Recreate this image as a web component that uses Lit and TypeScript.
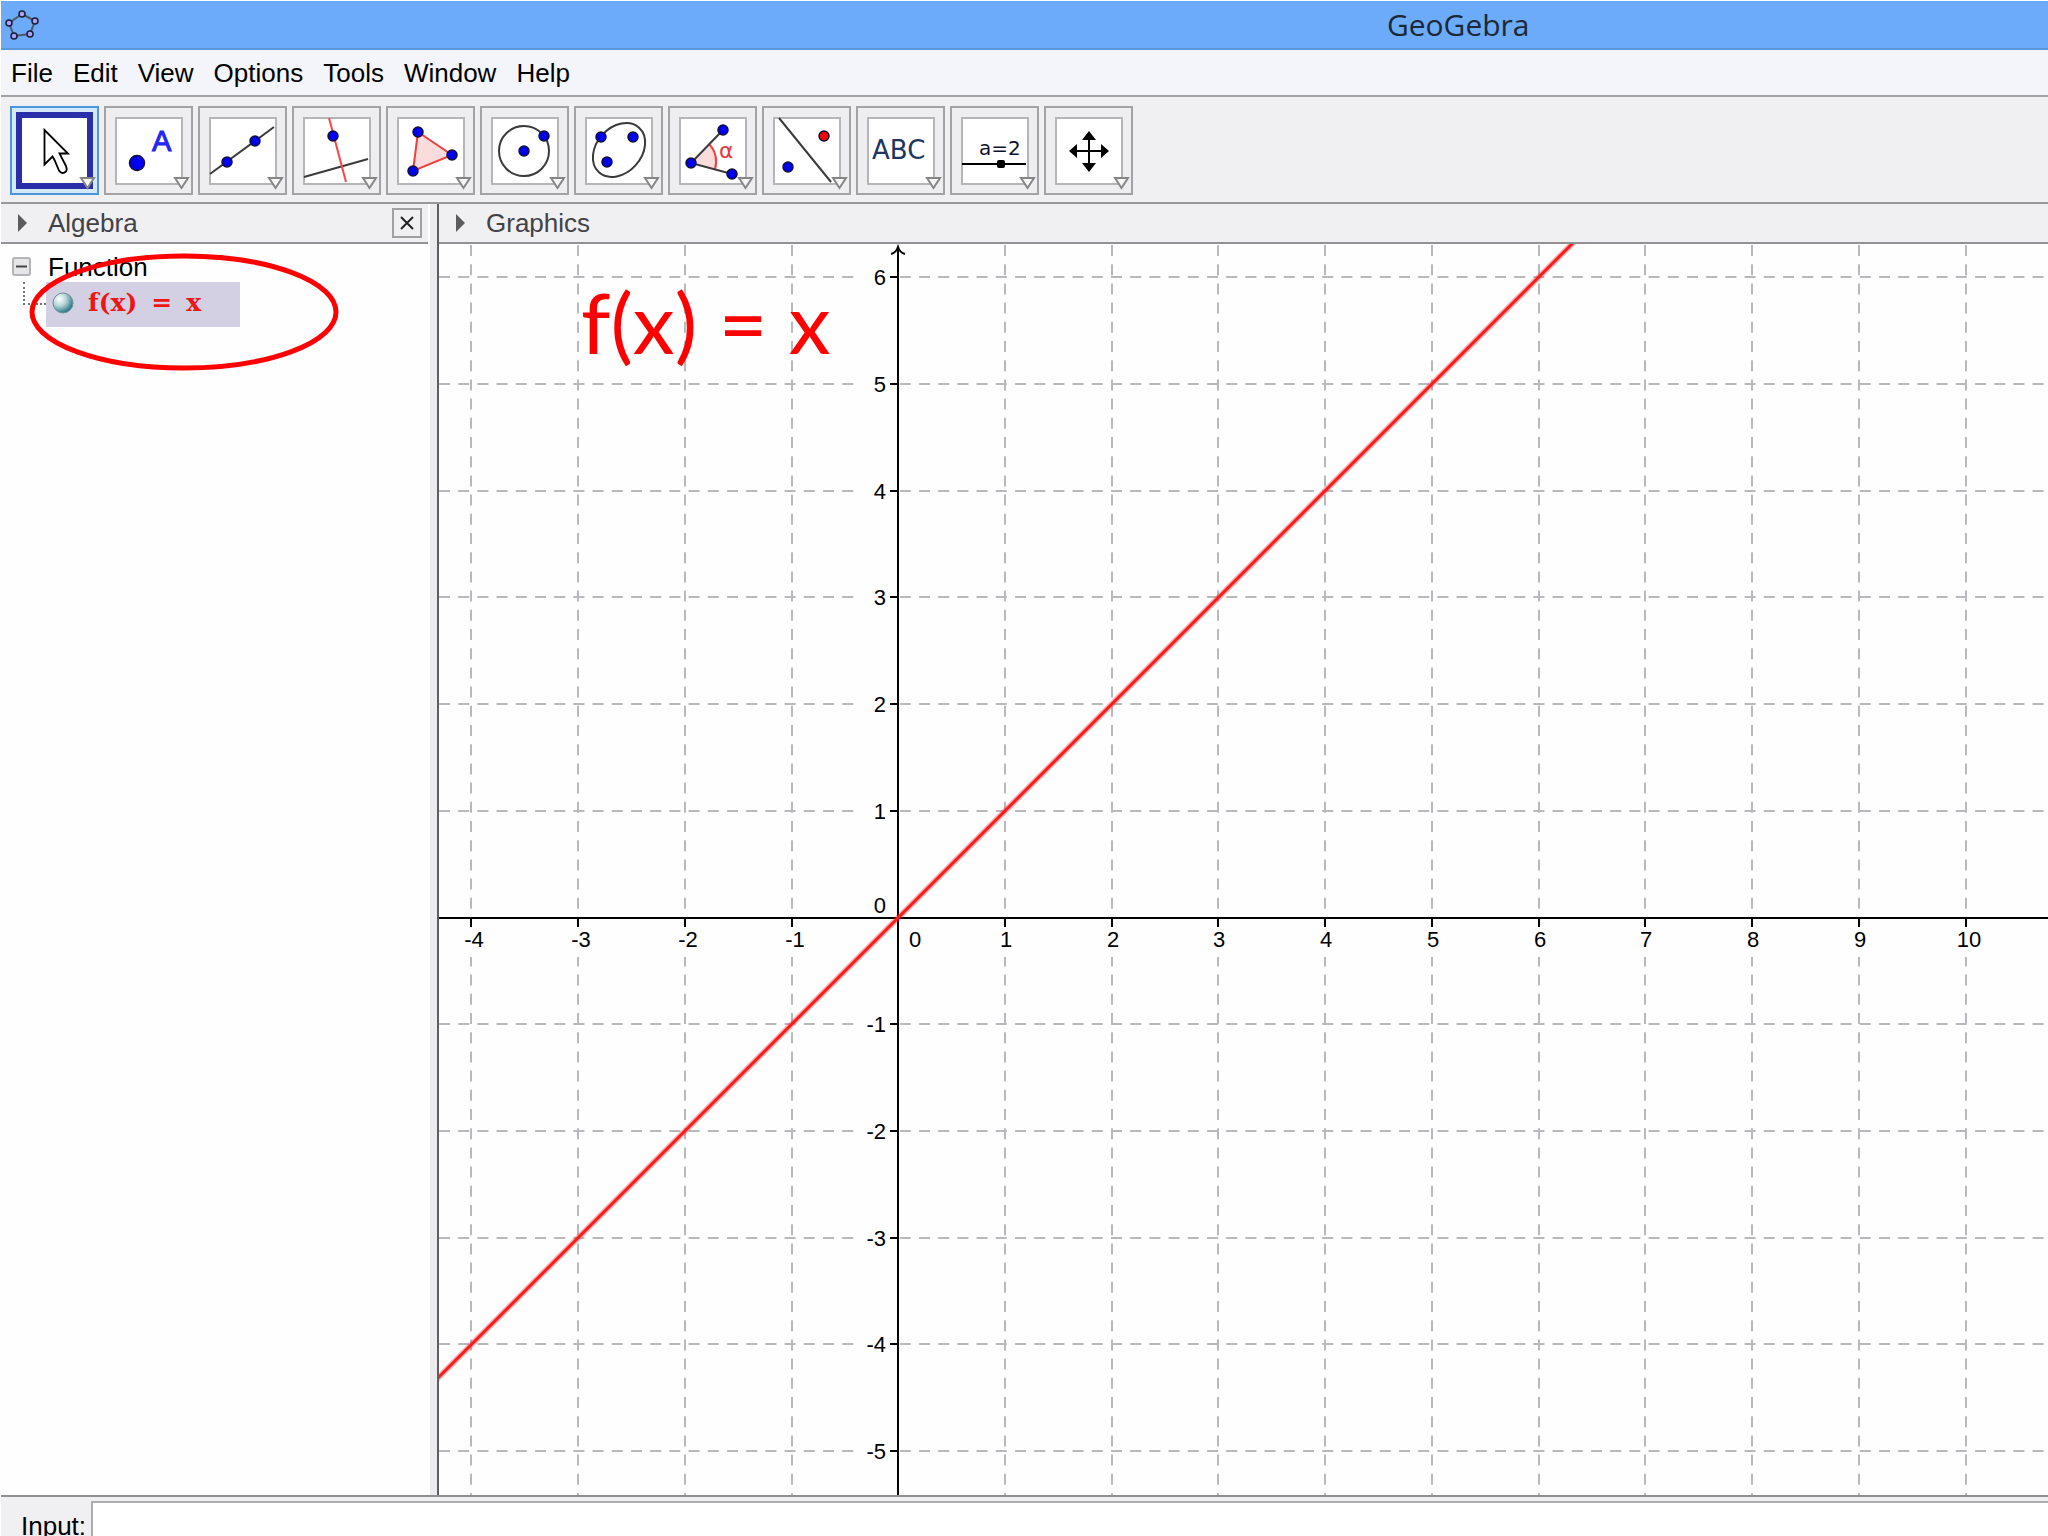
import { LitElement, html, svg, css, type TemplateResult } from "lit";
import { customElement, state } from "lit/decorators.js";

const point = (x: number, y: number, r = 5, fill = "#0000f0") =>
  svg`<circle cx=${x} cy=${y} r=${r} fill=${fill} stroke="#10103a" stroke-width="1.5"></circle>`;

interface Tool {
  name: string;
  icon: TemplateResult;
}

const tools: Tool[] = [
  {
    name: "Move",
    icon: svg`<path d="M34.5 24V58.5L42.5 50.5L44.5 54L49 64.5Q52 69 56 65.5Q57.5 63 56 60L49.5 47.5H58Z" fill="#fff" stroke="#000" stroke-width="1.8"></path>`,
  },
  {
    name: "New Point",
    icon: svg`${point(33, 57, 7.5)}<text x="48" y="45" class="letter">A</text>`,
  },
  {
    name: "Line through Two Points",
    icon: svg`<path d="M12 68L76 21" class="ink"></path>${point(29, 56)}${point(57, 35)}`,
  },
  {
    name: "Perpendicular Line",
    icon: svg`<path d="M12 71L76 53" class="ink"></path><path d="M37 12L54 76" stroke="#f44" stroke-width="2"></path>${point(41, 30)}`,
  },
  {
    name: "Polygon",
    icon: svg`<path d="M32 26L66 49L27 65Z" fill="#fbdcdc" stroke="#ee4040" stroke-width="2"></path>${point(32, 26)}${point(66, 49)}${point(27, 65)}`,
  },
  {
    name: "Circle with Center through Point",
    icon: svg`<circle cx="44" cy="45" r="25" class="ink"></circle>${point(44, 45)}${point(64, 30)}`,
  },
  {
    name: "Ellipse",
    icon: svg`<ellipse cx="45" cy="44" rx="30" ry="22.5" transform="rotate(-48 45 44)" class="ink"></ellipse>${point(27, 31)}${point(59, 31)}${point(33, 56)}`,
  },
  {
    name: "Angle",
    icon: svg`<path d="M23 57L41 38A25 25 0 0 1 47 63Z" fill="#fbdcdc"></path>
      <path d="M41 38A25 25 0 0 1 47 63" fill="none" stroke="#ee4040" stroke-width="2"></path>
      <path d="M55 24L23 57L64 68" class="ink"></path><text x="51" y="52" class="alpha">α</text>
      ${point(23, 57)}${point(55, 24)}${point(64, 68)}`,
  },
  {
    name: "Reflect Object about Line",
    icon: svg`<path d="M17 12L69 76" class="ink"></path>${point(62, 30, 5, "#ee0000")}${point(26, 61)}`,
  },
  {
    name: "Insert Text",
    icon: svg`<text x="16" y="53" class="abc">ABC</text>`,
  },
  {
    name: "Slider",
    icon: svg`<text x="29" y="49" class="slider">a=2</text><path d="M12 58H76" stroke="#000" stroke-width="2"></path><rect x="47" y="54" width="8" height="8" rx="2"></rect>`,
  },
  {
    name: "Move Graphics View",
    icon: svg`<path d="M45 27V64M27 45H63" stroke="#000" stroke-width="2"></path>
      <path d="M45 25L52 34H38ZM45 66L52 57H38ZM25 45L33 38V52ZM65 45L57 38V52Z"></path>`,
  },
];

@customElement("tool-button")
class ToolButton extends LitElement {
  static properties = { tool: { attribute: false }, active: { type: Boolean } };
  declare tool: Tool;
  declare active: boolean;

  static styles = css`
    :host {
      display: block;
    }
    button {
      display: block;
      width: 89px;
      height: 89px;
      padding: 0;
      border: 0;
      background: none;
    }
    svg {
      display: block;
    }
    .frame {
      fill: #eeedef;
      stroke: #a3a3a5;
      stroke-width: 2;
    }
    .well {
      fill: #fff;
      stroke: #b6b6b8;
      stroke-width: 2;
    }
    .active .frame {
      fill: #d3e9fb;
      stroke: #4a97de;
    }
    .active .well {
      stroke: #2a2ea8;
      stroke-width: 6;
    }
    .ink {
      fill: none;
      stroke: #3a3a3a;
      stroke-width: 2;
    }
    .letter {
      font: 29px "Liberation Sans", sans-serif;
      fill: #2424f4;
      stroke: #2424f4;
    }
    .alpha {
      font: 22px "DejaVu Sans", sans-serif;
      fill: #e8383c;
    }
    .abc {
      font: 26px "DejaVu Sans", sans-serif;
      fill: #1d3560;
    }
    .slider {
      font: 20px "DejaVu Sans", sans-serif;
      fill: #101030;
    }
    .more {
      fill: #f6f6f6;
      stroke: #858585;
      stroke-width: 2;
    }
  `;

  render() {
    const well = this.active ? [9, 71] : [12, 66];
    return html`<button
      type="button"
      class=${this.active ? "active" : ""}
      aria-label=${this.tool.name}
      aria-pressed=${this.active ? "true" : "false"}
    >
      <svg width="89" height="89" viewBox="0 0 89 89" aria-hidden="true">
        <rect class="frame" x="1" y="1" width="87" height="87"></rect>
        <rect class="well" x=${well[0]} y=${well[0]} width=${well[1]} height=${well[1]}></rect>
        ${this.tool.icon}
        <path class="more" d="M71 72H84L77.5 82Z"></path>
      </svg>
    </button>`;
  }
}

const UNIT = 106.72;
const ORIGIN = { x: 459.3, y: 673.6 };
const xs = Array.from({ length: 15 }, (_, i) => i - 4);
const ys = Array.from({ length: 12 }, (_, i) => 6 - i);
const toX = (v: number) => ORIGIN.x + v * UNIT;
const toY = (v: number) => ORIGIN.y - v * UNIT;

@customElement("graph-view")
class GraphView extends LitElement {
  static styles = css`
    :host {
      display: block;
      flex: 1;
      min-height: 0;
      position: relative;
      overflow: hidden;
      background: #fefefe;
    }
    .plot {
      display: block;
      width: 100%;
      height: 100%;
    }
    .grid {
      stroke: #b9b9bd;
      stroke-width: 2;
      stroke-dasharray: 11 8.2;
    }
    .blank {
      fill: #fefefe;
    }
    .axis {
      fill: none;
      stroke: #000;
      stroke-width: 2;
    }
    .label {
      font: 22px "Liberation Sans", Arial, sans-serif;
      fill: #000;
    }
    .mid {
      text-anchor: middle;
    }
    .end {
      text-anchor: end;
    }
    .halo {
      stroke: #ff2a2a;
      stroke-opacity: 0.35;
      stroke-width: 6;
    }
    .line {
      stroke: #f81c1c;
      stroke-width: 3;
    }
    .formula {
      position: absolute;
      left: 142px;
      top: 28px;
      font: 84px/100px Lato, Calibri, sans-serif;
      color: #f00;
      white-space: pre;
    }
  `;

  render() {
    return html`<svg class="plot" role="img" aria-label="f(x) = x">
        ${xs.map((v) => svg`<line class="grid" x1=${Math.round(toX(v))} x2=${Math.round(toX(v))} y1="1" y2="100%"></line>`)}
        ${ys.map((v) => svg`<line class="grid" x1="0" x2="100%" y1=${Math.round(toY(v))} y2=${Math.round(toY(v))}></line>`)}
        <rect class="blank" x="416" y="0" width="43" height="100%"></rect>
        <rect class="blank" x="0" y="668" width="100%" height="45"></rect>
        <line class="axis" x1="0" x2="100%" y1="674" y2="674"></line>
        <line class="axis" x1="459" x2="459" y1="4" y2="100%"></line>
        <path class="axis" d="M452 10Q457 9 459 3Q461 9 466 10"></path>
        ${xs.map((v) => {
          const x = Math.round(toX(v));
          const shift = v === 0 ? 17 : v < 0 || v > 9 ? 3 : 1;
          return svg`${v === 0 ? "" : svg`<path class="axis" d="M${x} 674V683"></path>`}
            <text class="label mid" x=${x + shift} y="703">${v}</text>`;
        })}
        ${ys.map((v) => {
          const y = Math.round(toY(v));
          return svg`${v === 0 ? "" : svg`<path class="axis" d="M451 ${y}H459"></path>`}
            <text class="label end" x="447" y=${v === 0 ? y - 5 : y + 8}>${v}</text>`;
        })}
        <line class="halo" x1=${toX(-5)} y1=${toY(-5)} x2=${toX(8)} y2=${toY(8)}></line>
        <line class="line" x1=${toX(-5)} y1=${toY(-5)} x2=${toX(8)} y2=${toY(8)}></line>
      </svg>
      <span class="formula">f(x) = x</span>`;
  }
}

@customElement("app-root")
class AppRoot extends LitElement {
  @state() private activeTool = 0;

  static styles = css`
    :host {
      display: block;
      font: 26px/30px "Liberation Sans", Arial, sans-serif;
      color: #000;
    }
    * {
      box-sizing: border-box;
    }
    .window {
      display: flex;
      flex-direction: column;
      height: 100vh;
      overflow: hidden;
      padding: 1px 0 0 1px;
      background: #fefefe;
    }
    .title-bar {
      display: flex;
      align-items: center;
      height: 49px;
      padding-left: 4px;
      background: #6cabf9;
      border-bottom: 2px solid #5c97dc;
    }
    .title {
      flex: 1;
      margin: 0;
      padding-left: 40.5%;
      text-align: center;
      font: 30px/40px "Open Sans", "Noto Sans", sans-serif;
      color: #1c2838;
    }
    .menu {
      display: flex;
      align-items: center;
      gap: 20px;
      height: 47px;
      padding-left: 10px;
      background: #f4f5fa;
      border-bottom: 2px solid #a2a2a5;
    }
    .menu button {
      padding: 0;
      border: 0;
      background: none;
      font: inherit;
      color: inherit;
    }
    .tools {
      display: flex;
      gap: 5px;
      padding: 9px 9px 7px;
      background: #f0eff1;
      border-bottom: 2px solid #98989a;
    }
    .panels {
      display: flex;
      flex: 1;
      min-height: 0;
    }
    .algebra {
      position: relative;
      flex: none;
      width: 429px;
    }
    .splitter {
      flex: none;
      width: 9px;
      background: #ecebee;
      border-right: 2px solid #5e5e60;
    }
    .graphics {
      display: flex;
      flex-direction: column;
      flex: 1;
      min-width: 0;
    }
    .panel-head {
      display: flex;
      align-items: center;
      flex: none;
      gap: 21px;
      height: 40px;
      padding-left: 17px;
      background: #f0eff1;
      border-bottom: 2px solid #929294;
      color: #424246;
    }
    .panel-head h2 {
      flex: 1;
      margin: 0;
      font: inherit;
    }
    .algebra .panel-head {
      margin-right: 2px;
      padding-right: 6px;
    }
    .close {
      width: 30px;
      height: 30px;
      padding: 0;
      border: 2px solid #a0a0a2;
      background: #f0eff1;
    }
    .close svg,
    .arrow {
      display: block;
    }
    .tree {
      padding: 7px 0 0 11px;
    }
    .branch {
      display: flex;
      align-items: center;
      gap: 17px;
      height: 31px;
    }
    .leaf {
      display: flex;
      height: 45px;
    }
    .twig {
      width: 23px;
      height: 23px;
      margin-left: 11px;
      border-left: 2px dotted #777;
      border-bottom: 2px dotted #777;
    }
    .object {
      display: flex;
      align-items: center;
      gap: 14px;
      width: 194px;
      padding: 0 0 4px 6px;
      background: #d3d0e4;
      font: bold 25px/36px "DejaVu Serif", serif;
      color: #f01414;
    }
    .mark {
      position: absolute;
      left: 27px;
      top: 48px;
      pointer-events: none;
    }
    .input-bar {
      display: flex;
      align-items: flex-start;
      gap: 5px;
      height: 41px;
      flex: none;
      padding: 4px 0 0 20px;
      background: #f0eff2;
      border-top: 2px solid #8f8f92;
      overflow: hidden;
    }
    .input-bar label {
      padding-top: 10px;
    }
    .input-bar input {
      flex: 1;
      min-width: 0;
      height: 50px;
      padding: 0 8px;
      border: 2px solid #adadb0;
      border-right: 0;
      border-radius: 0;
      background: #fff;
      font: inherit;
      outline: 0;
    }
  `;

  private arrow() {
    return html`<svg class="arrow" width="9" height="18" viewBox="0 0 9 18" aria-hidden="true">
      <path d="M0 0L9 9L0 18Z" fill="#5c5c5e"></path>
    </svg>`;
  }

  render() {
    const menus = ["File", "Edit", "View", "Options", "Tools", "Window", "Help"];
    return html`<div class="window">
      <header class="title-bar">
        <svg width="36" height="32" viewBox="0 0 36 32" aria-hidden="true">
          <path d="M17 5L30 12L25 25L9 27L4 14Z" fill="none" stroke="#4c5a66" stroke-width="2"></path>
          ${[[17, 5], [30, 12], [25, 25], [9, 27], [4, 14]].map(
            ([x, y]) => svg`<circle cx=${x} cy=${y} r="3" fill="#a9a4f4" stroke="#1c1c3c" stroke-width="1.5"></circle>`
          )}
        </svg>
        <h1 class="title">GeoGebra</h1>
      </header>
      <nav class="menu">${menus.map((m) => html`<button type="button">${m}</button>`)}</nav>
      <div class="tools" role="toolbar" aria-label="Tools">
        ${tools.map(
          (t, i) => html`<tool-button
            .tool=${t}
            .active=${i === this.activeTool}
            @click=${() => (this.activeTool = i)}
          ></tool-button>`
        )}
      </div>
      <main class="panels">
        <section class="algebra">
          <div class="panel-head">
            ${this.arrow()}
            <h2>Algebra</h2>
            <button class="close" type="button" aria-label="Close">
              <svg width="26" height="26" viewBox="0 0 26 26" aria-hidden="true">
                <path d="M7 7L19 19M19 7L7 19" stroke="#222" stroke-width="2"></path>
              </svg>
            </button>
          </div>
          <div class="tree">
            <div class="branch">
              <svg width="19" height="19" viewBox="0 0 19 19" aria-hidden="true">
                <rect x="1" y="1" width="17" height="17" rx="2" fill="#e6e6e8" stroke="#b4b4b6" stroke-width="2"></rect>
                <path d="M4 9.5H15" stroke="#444" stroke-width="2"></path>
              </svg>
              <span>Function</span>
            </div>
            <div class="leaf">
              <span class="twig"></span>
              <div class="object">
                <svg width="22" height="22" viewBox="0 0 22 22" aria-hidden="true">
                  <defs>
                    <radialGradient id="ball" cx="0.32" cy="0.3" r="0.75">
                      <stop offset="0" stop-color="#fff"></stop>
                      <stop offset="0.45" stop-color="#b9d6d6"></stop>
                      <stop offset="1" stop-color="#1f6f86"></stop>
                    </radialGradient>
                  </defs>
                  <circle cx="11" cy="11" r="10" fill="url(#ball)" stroke="#6f8f98"></circle>
                </svg>
                <span>f(x)</span><span>=</span><span>x</span>
              </div>
            </div>
          </div>
          <svg class="mark" width="312" height="120" viewBox="0 0 312 120" aria-hidden="true">
            <ellipse cx="156" cy="60" rx="152" ry="56" fill="none" stroke="#f00" stroke-width="5"></ellipse>
          </svg>
        </section>
        <div class="splitter"></div>
        <section class="graphics">
          <div class="panel-head">${this.arrow()}<h2>Graphics</h2></div>
          <graph-view></graph-view>
        </section>
      </main>
      <footer class="input-bar">
        <label for="command">Input:</label>
        <input id="command" type="text" />
      </footer>
    </div>`;
  }
}
